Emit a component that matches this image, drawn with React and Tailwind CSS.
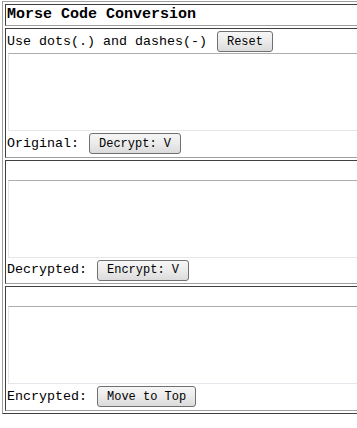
import React from 'react'

const mono = { fontFamily: '"Liberation Mono", "DejaVu Sans Mono", monospace' }

function Btn({ children }) {
	return (
		<button
			type="button"
			className="ml-[10px] h-[21px] shrink-0 rounded-[3px] border border-[#707070] bg-gradient-to-b from-[#f6f6f6] via-[#ebebeb] to-[#dbdbdb] px-[9px] text-[12px] leading-none text-black"
			style={mono}
		>
			{children}
		</button>
	)
}

function Pad({ top, label, button, lineH }) {
	return (
		<div className="border border-t-[#404040] border-l-[#404040] border-b-[#a0a0a0] border-r-[#a0a0a0] p-[1px]">
			{top}
			<div className="ml-[1px] h-[78px] w-[400px] border border-[#e3e6ea] border-t-[#abadb3] bg-white" />
			<div className={`flex items-center ${lineH}`}>
				<span>{label}</span>
				<Btn>{button}</Btn>
			</div>
		</div>
	)
}

export default function App() {
	return (
		<div className="h-[428px] w-[357px] overflow-hidden bg-white pl-[2px] pt-[1px] text-[13.33px] text-black" style={mono}>
			<div className="flex w-[420px] flex-col gap-[2px] border border-t-[#a0a0a0] border-l-[#a0a0a0] border-b-[#404040] border-r-[#404040] p-[2px]">
				<div className="border border-t-[#404040] border-l-[#404040] border-b-[#a0a0a0] border-r-[#a0a0a0] p-[1px]">
					<div className="flex h-[18px] items-center text-[15px] font-bold">Morse Code Conversion</div>
				</div>

				<Pad
					top={
						<div className="flex h-[23px] items-center">
							<span>Use dots(.) and dashes(-)</span>
							<Btn>Reset</Btn>
						</div>
					}
					label="Original:"
					button="Decrypt: V"
					lineH="h-[25px]"
				/>

				<Pad
					top={<div className="h-[18px]" />}
					label="Decrypted:"
					button="Encrypt: V"
					lineH="h-[24px]"
				/>

				<Pad
					top={<div className="h-[18px]" />}
					label="Encrypted:"
					button="Move to Top"
					lineH="h-[25px]"
				/>
			</div>
		</div>
	)
}
